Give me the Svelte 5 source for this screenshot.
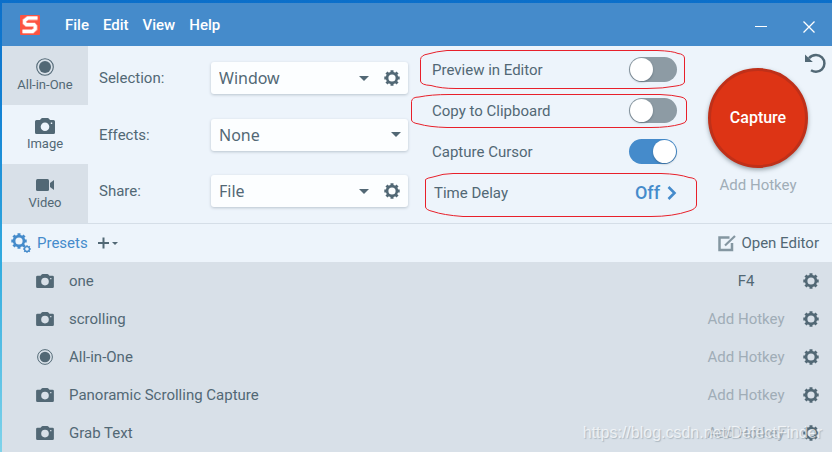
<script lang="ts">
  const menus = ['File', 'Edit', 'View', 'Help'];

  const modes = [
    { id: 'all', label: 'All-in-One', icon: 'target' },
    { id: 'image', label: 'Image', icon: 'camera' },
    { id: 'video', label: 'Video', icon: 'video' }
  ];

  const fields = [
    { id: 'selection', label: 'Selection:', options: ['Window', 'Region', 'Full Screen'], settings: true },
    { id: 'effects', label: 'Effects:', options: ['None', 'Border', 'Shadow'], settings: false },
    { id: 'share', label: 'Share:', options: ['File', 'Clipboard', 'Email'], settings: true }
  ];

  const presets = [
    { name: 'one', icon: 'camera', hotkey: 'F4' },
    { name: 'scrolling', icon: 'camera', hotkey: '' },
    { name: 'All-in-One', icon: 'target', hotkey: '' },
    { name: 'Panoramic Scrolling Capture', icon: 'camera', hotkey: '' },
    { name: 'Grab Text', icon: 'camera', hotkey: '' }
  ];

  let mode = $state('image');
  let switches = $state([
    { id: 'preview', label: 'Preview in Editor', on: false },
    { id: 'clipboard', label: 'Copy to Clipboard', on: false },
    { id: 'cursor', label: 'Capture Cursor', on: true }
  ]);
</script>

{#snippet gear(size: number)}
  <svg width={size} height={size} viewBox="0 0 16 16" fill="none" stroke="currentColor" aria-hidden="true">
    <circle cx="8" cy="8" r="4.9" stroke-width="2.6" />
    <path d="M8 .3v3M8 12.700v3M.3 8h3M12.700 8h3" stroke-width="3" />
    <path d="M2.500 2.500l2 2M11.500 11.500l2 2M13.500 2.500l-2 2M4.500 11.500l-2 2" stroke-width="3" />
  </svg>
{/snippet}

{#snippet icon(name: string)}
  {#if name === 'camera'}
    <svg class="icon" viewBox="0 0 20 18" aria-hidden="true">
      <path fill="currentColor" fill-rule="evenodd" d="M1.500 3H5l1.200-1.400q.4-.6 1.100-.6h5.400q.7 0 1.100.6L15 3h3.500Q20 3 20 4.500v11q0 1.500-1.500 1.500h-17Q0 17 0 15.500v-11Q0 3 1.500 3zM10 5.400a4.300 4.300 0 1 0 0 8.600a4.300 4.300 0 1 0 0-8.600zM15.800 5.500v1.600h1.400V5.500z" />
    </svg>
  {:else if name === 'target'}
    <svg class="icon" viewBox="0 0 18 18" aria-hidden="true">
      <circle cx="9" cy="9" r="8.300" fill="none" stroke="currentColor" stroke-width="1.100" />
      <circle cx="9" cy="9" r="6" fill="currentColor" />
    </svg>
  {:else}
    <svg class="icon" viewBox="0 0 18 18" aria-hidden="true">
      <rect x="0" y="3" width="13" height="12" rx="1.500" fill="currentColor" />
      <path d="M18 4v10l-4-3V7z" fill="currentColor" />
    </svg>
  {/if}
{/snippet}

<div class="desktop">
  <div class="window">
    <header class="titlebar">
      <svg class="logo" viewBox="0 0 20 20" aria-hidden="true">
        <rect width="20" height="20" rx="1" fill="#fc5442" />
        <path d="M17.500 3.200H7.500L4.500 5.500V8L6.500 9.800H14l1.500 1.500v2.700L12.500 16.500H2.500" fill="none" stroke="#ff9a8e" stroke-width="4.400" />
        <path d="M17.500 3H8L4.700 5.500V8L6.500 9.600H14l1.200 1.500v2.800l-2.600 2.500H2.500" fill="none" stroke="#fff" stroke-width="3.200" />
      </svg>
      <nav class="menu">
        {#each menus as m}
          <button class="menu__item">{m}</button>
        {/each}
      </nav>
      <button class="winbtn" aria-label="Minimize">
        <svg width="12" height="12" viewBox="0 0 12 12"><path d="M0 5.500h12" stroke="#fff" /></svg>
      </button>
      <button class="winbtn" aria-label="Close">
        <svg width="12" height="12" viewBox="0 0 12 12"><path d="M.5.5l11 11M11.500.5l-11 11" stroke="#fff" stroke-width="1.300" /></svg>
      </button>
    </header>

    <main class="main">
      <div class="tabs">
        {#each modes as m}
          <button class="tab" class:tab--active={mode === m.id} aria-pressed={mode === m.id} onclick={() => (mode = m.id)}>
            {@render icon(m.icon)}
            <span>{m.label}</span>
          </button>
        {/each}
      </div>

      <div class="fields">
        {#each fields as f}
          <div class="field">
            <label for={f.id}>{f.label}</label>
            <div class="combo">
              <div class="combo__pick">
                <select id={f.id}>
                  {#each f.options as o}
                    <option>{o}</option>
                  {/each}
                </select>
                <svg class="combo__arrow" width="10" height="5" viewBox="0 0 10 5" aria-hidden="true"><path d="M0 0h10L5 5z" fill="currentColor" /></svg>
              </div>
              {#if f.settings}
                <button class="combo__gear" aria-label="{f.label} settings">{@render gear(16)}</button>
              {/if}
            </div>
          </div>
        {/each}
      </div>

      <div class="options">
        {#each switches as s}
          <div class="option">
            <label for={s.id}>{s.label}</label>
            <input id={s.id} class="switch" type="checkbox" role="switch" bind:checked={s.on} />
          </div>
        {/each}
        <div class="option option--delay">
          <span>Time Delay</span>
          <button class="delay">
            Off
            <svg width="10" height="14" viewBox="0 0 10 14" aria-hidden="true"><path d="M1.500 1l6 6-6 6" fill="none" stroke="currentColor" stroke-width="2.600" /></svg>
          </button>
        </div>
        <!-- hand-drawn markers round the rows to change -->
        <svg class="marks" width="288" height="170" viewBox="0 0 288 170" fill="none" stroke="#e8202a" aria-hidden="true">
          <path d="M9.500 9.500Q10 5 17 4Q25 1.500 36 .5H246Q262 1 267 3.500Q273 4 273.500 8V32Q273 35 265 36Q252 38.500 236 38.500H45Q30 38.500 20 35.500Q10 35 9.500 31z" />
          <path d="M.5 51.500Q1 47 8 47Q20 44.500 38 44.500H249Q262 45 270 47Q275 48 275.500 52V70Q275 73 270 74Q258 77.500 240 77.500H36Q18 77 8 74Q1 73 .5 70z" />
          <path d="M14.500 129.500Q16 128 22 127Q32 123.500 42 123.500H250Q268 124 278 127.500Q285 128 285.500 132V155Q285 159 278 161Q262 166.500 240 166.500H52Q32 165 22 161.500Q15 160 14.500 157z" />
        </svg>
      </div>

      <div class="shoot">
        <button class="undo" aria-label="Reset">
          <svg width="21" height="21" viewBox="0 0 21 21" aria-hidden="true">
            <path d="M4 5.200Q6.500 2 11 2a8.300 8.300 0 0 1 0 16.800q-2.500 0-5-1.500" fill="none" stroke="currentColor" stroke-width="2.500" />
            <path d="M0 1.500v7.500h7.800z" fill="currentColor" />
          </svg>
        </button>
        <button class="capture">Capture</button>
        <button class="hotkey hotkey--empty">Add Hotkey</button>
      </div>
    </main>

    <div class="presetbar">
      <button class="presetbar__title">
        <span class="gears">{@render gear(16)}{@render gear(8)}</span>
        Presets
      </button>
      <button class="presetbar__add" aria-label="Add preset">
        <svg width="20" height="12" viewBox="0 0 20 12"><path d="M0 6h11M5.500.5v11" stroke="currentColor" stroke-width="2" /><path d="M14 5h6l-3 3z" fill="currentColor" /></svg>
      </button>
      <button class="presetbar__editor">
        <svg width="18" height="17" viewBox="0 0 18 17" fill="none" aria-hidden="true">
          <path d="M11.500 2.500H1.500v12.500h12.500V8" stroke="#8496a1" stroke-width="2.500" />
          <path d="M7 10.500L17 1" stroke="#8496a1" stroke-width="2.200" />
        </svg>
        Open Editor
      </button>
    </div>

    <ul class="list">
      {#each presets as p}
        <li class="row">
          <span class="row__icon">{@render icon(p.icon)}</span>
          <span class="row__name">{p.name}</span>
          <button class="hotkey" class:hotkey--empty={!p.hotkey}>{p.hotkey || 'Add Hotkey'}</button>
          <button class="row__gear" aria-label="{p.name} settings">{@render gear(16)}</button>
        </li>
      {/each}
    </ul>
  </div>
  <span class="watermark">https://blog.csdn.net/DefectFinder</span>
</div>

<style>
  :global(body) { margin: 0; }
  .desktop { box-sizing: border-box; position: relative; min-height: 100vh; padding: 3px 0 0 2px; display: flex; flex-direction: column; background: linear-gradient(180deg, #0b6fca 0, #1483d4 25%, #35aee0 60%, #7fd3ea 100%); overflow: hidden; color: #526875; font-family: Roboto, "Liberation Sans", sans-serif; font-size: 15px; line-height: 20px; }
  .window { flex: 1; display: flex; flex-direction: column; background: #d8e0e8; }
  button { display: flex; align-items: center; margin: 0; padding: 0; border: 0; background: none; color: inherit; font: inherit; cursor: pointer; }
  svg { display: block; flex: none; }

  .titlebar { display: flex; align-items: center; height: 43px; padding: 0 15px 0 18px; background: #458bcb; color: #fff; }
  .logo { width: 20px; height: 20px; }
  .menu { flex: 1; display: flex; gap: 14px; margin-left: 25px; font-weight: 500; }
  .winbtn { justify-content: center; width: 16px; height: 24px; padding-top: 4px; margin-left: 32px; }

  .main { display: flex; min-height: 177px; background: #edf4fb; border-bottom: 1px solid #d5dee7; }
  .tabs { display: flex; flex-direction: column; width: 86px; }
  .tab { flex: 1; flex-direction: column; justify-content: center; gap: 1px; background: #d8e0e8; font-size: 13px; line-height: 16px; }
  .tab--active { background: #edf4fb; }
  .icon { width: 20px; height: 18px; }

  .fields { display: flex; flex-direction: column; justify-content: space-between; padding: 16px 0; margin-left: 11px; }
  .field { display: flex; align-items: center; }
  .field label { width: 112px; }
  .combo { display: flex; width: 197px; height: 32px; background: #fcfeff; border-radius: 3px; box-shadow: 0 1px 3px #b9c4ce; }
  .combo__pick { flex: 1; display: grid; align-items: center; }
  .combo__pick select { grid-area: 1 / 1; width: 100%; height: 32px; padding: 0 24px 0 8px; border: 0; background: none; appearance: none; color: inherit; font: 16px "Noto Sans", sans-serif; }
  .combo__arrow { grid-area: 1 / 1; justify-self: end; margin-right: 7px; pointer-events: none; }
  .combo__gear { justify-content: center; width: 32px; }

  .options { position: relative; width: 245px; margin-left: 24px; padding-top: 3px; }
  .option { display: flex; align-items: center; justify-content: space-between; height: 41px; }
  .option--delay { padding-left: 2px; }
  .switch { appearance: none; width: 48px; height: 25px; margin: 0; border-radius: 13px; background: #8d9ba4; display: flex; align-items: center; padding: 0 1px; box-sizing: border-box; cursor: pointer; }
  .switch::before { content: ""; width: 23px; height: 23px; border-radius: 50%; background: #fff; box-shadow: 0 1px 2px rgba(40, 60, 75, 0.4); }
  .switch:checked { background: #458bcb; justify-content: flex-end; }
  .delay { gap: 7px; color: #458bcb; font-size: 18px; font-weight: 500; }
  .marks { position: absolute; left: -21px; top: 4px; pointer-events: none; }

  .shoot { flex: 1; position: relative; display: flex; flex-direction: column; align-items: flex-end; padding: 22px 24px 0 0; }
  .undo { position: absolute; top: 7px; right: 6px; }
  .capture { justify-content: center; width: 100px; height: 100px; border-radius: 50%; border: 3px solid #bf3019; background: #dd3415; color: #fff; font-size: 16px; font-weight: 500; box-shadow: 0 2px 4px rgba(70, 85, 95, 0.5); }
  .hotkey { justify-content: center; width: 100px; }
  .hotkey--empty { color: #a0adb7; }
  .shoot .hotkey { margin-top: 7px; }

  .presetbar { display: flex; align-items: center; height: 38px; padding: 0 13px 0 9px; background: #edf4fb; }
  .presetbar__title { gap: 6px; color: #458bcb; }
  .gears { display: flex; align-items: flex-end; height: 20px; }
  .gears :global(svg:first-child) { align-self: flex-start; }
  .gears :global(svg:last-child) { margin-left: -4px; }
  .presetbar__add { margin-left: 10px; }
  .presetbar__editor { gap: 5px; margin-left: auto; }

  .list { flex: 1; margin: 0; padding: 0; list-style: none; background: #d8e0e8; }
  .row { display: flex; align-items: center; height: 38px; padding: 0 13px 0 33px; }
  .row__icon { width: 34px; }
  .row__icon .icon { width: 20px; height: 16px; }
  .row__name { flex: 1; }
  .row .hotkey { margin-right: 7px; }
  .watermark { position: absolute; right: 10px; bottom: 9px; color: rgba(255, 255, 255, 0.7); font-family: "Liberation Sans", sans-serif; font-size: 16px; text-shadow: 1px 1px 1px rgba(130, 145, 155, 0.5); pointer-events: none; }
</style>
